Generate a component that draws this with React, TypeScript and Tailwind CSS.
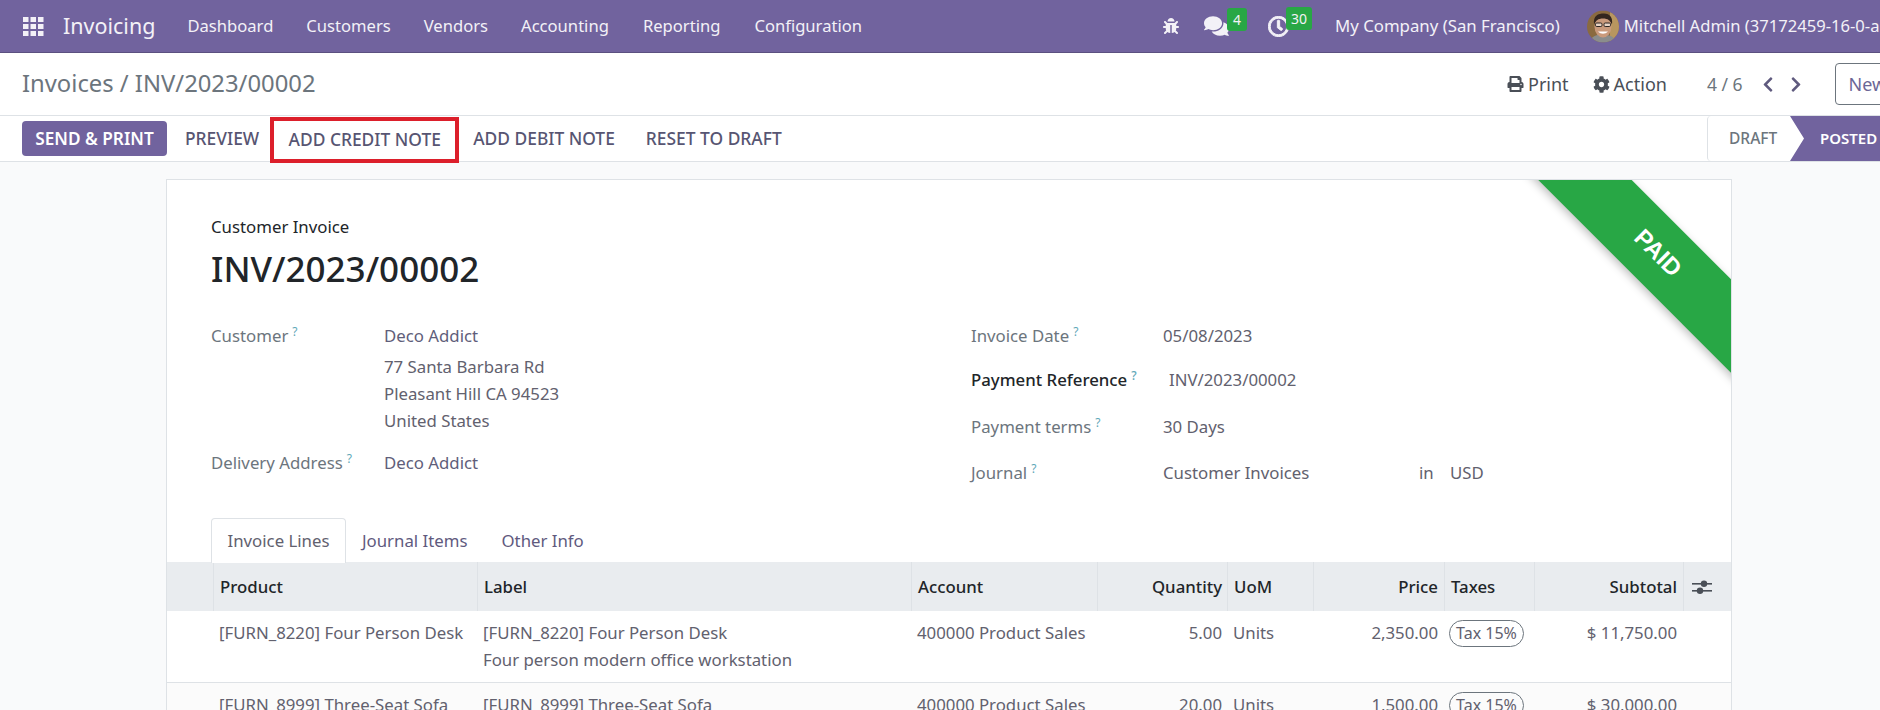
import { FaBug, FaChevronLeft, FaChevronRight, FaCog, FaComments, FaPrint, FaRegClock } from 'react-icons/fa';

const navLinks = [
    { label: 'Dashboard', className: 'ml-[32px]' },
    { label: 'Customers', className: 'ml-[33px]' },
    { label: 'Vendors', className: 'ml-[33px]' },
    { label: 'Accounting', className: 'ml-[33px]' },
    { label: 'Reporting', className: 'ml-[34px]' },
    { label: 'Configuration', className: 'ml-[34px]' },
];

const rows = [
    {
        product: '[FURN_8220] Four Person Desk',
        label: '[FURN_8220] Four Person Desk',
        note: 'Four person modern office workstation',
        quantity: '5.00',
        price: '2,350.00',
        subtotal: '$ 11,750.00',
    },
    {
        product: '[FURN_8999] Three-Seat Sofa',
        label: '[FURN_8999] Three-Seat Sofa',
        note: 'Three Seater Sofa with Lounger in Steel Grey Colour',
        quantity: '20.00',
        price: '1,500.00',
        subtotal: '$ 30,000.00',
    },
];

const tableCols = 'grid grid-cols-[46px_264px_434px_186px_130px_86px_131px_90px_149px_48px]';

function Help() {
    return <sup className="ml-[4px] text-[12px] text-[#5fa8b8]">?</sup>;
}

function Avatar() {
    return (
        <svg viewBox="0 0 32 32" className="h-[33px] w-[32px] shrink-0">
            <clipPath id="avatar-clip">
                <circle cx="16" cy="16" r="16" />
            </clipPath>
            <g clipPath="url(#avatar-clip)">
                <rect width="32" height="32" fill="#8a6a3f" />
                <rect x="23" width="9" height="32" fill="#b8965f" />
                <path d="M3 32c1-7 7-8 13-8s12 2 13 8z" fill="#8b8d8c" />
                <ellipse cx="16" cy="16" rx="8.5" ry="11" fill="#c99a7c" />
                <path d="M7 14C6 5 11 3 17 3s9 4 8 11c-2-4-4-6-9-6s-7 2-9 6z" fill="#33261f" />
                <rect x="8.5" y="12.5" width="6.5" height="3.5" rx="1.2" fill="#e9d5c6" stroke="#2b2523" strokeWidth="1" />
                <rect x="17" y="12.5" width="6.5" height="3.5" rx="1.2" fill="#e9d5c6" stroke="#2b2523" strokeWidth="1" />
                <path d="M11 21c3 3 7 3 10 0z" fill="#fff" />
            </g>
        </svg>
    );
}

function AppsIcon() {
    return (
        <svg viewBox="0 0 21 19" className="h-[19px] w-[21px] shrink-0" fill="#f3f1f7">
            <rect x="0" y="0" width="5.5" height="5" />
            <rect x="7.5" y="0" width="5.5" height="5" />
            <rect x="15" y="0" width="5.5" height="5" />
            <rect x="0" y="7" width="5.5" height="5" />
            <rect x="7.5" y="7" width="5.5" height="5" />
            <rect x="15" y="7" width="5.5" height="5" />
            <rect x="0" y="14" width="5.5" height="5" />
            <rect x="7.5" y="14" width="5.5" height="5" />
            <rect x="15" y="14" width="5.5" height="5" />
        </svg>
    );
}

function SlidersIcon() {
    return (
        <svg viewBox="0 0 20 16" className="h-[16px] w-[20px]" fill="#4a4f57">
            <rect x="0" y="4" width="20" height="1.6" />
            <rect x="0" y="11" width="20" height="1.6" />
            <circle cx="12" cy="4.8" r="3.2" />
            <circle cx="8" cy="11.8" r="3.2" />
        </svg>
    );
}

export default function App() {
    return (
        <div className="h-[710px] w-[1880px] overflow-hidden bg-[#f9fafb] font-['Noto_Sans',sans-serif] text-[16.8px] text-[#62616e]">
            {/* Top navbar */}
            <header className="flex h-[53px] items-center overflow-hidden whitespace-nowrap border-b border-[#5b5080] bg-[#71639e] pl-[23px] text-[16.6px] text-[#f3f1f7]">
                <AppsIcon />
                <span className="ml-[19px] text-[21.5px]">Invoicing</span>
                {navLinks.map((link) => (
                    <span key={link.label} className={link.className}>
                        {link.label}
                    </span>
                ))}
                <FaBug className="ml-[301px] h-[16px] w-[16px] shrink-0" />
                <div className="relative ml-[25px] flex w-[44px] shrink-0">
                    <FaComments className="h-[24px] w-[25px]" />
                    <span className="absolute -top-[6px] left-[23px] rounded-[3px] bg-[#28a745] px-[6px] text-[14px] leading-[23px]">4</span>
                </div>
                <div className="relative ml-[20px] flex w-[45px] shrink-0">
                    <FaRegClock className="h-[21px] w-[21px] stroke-[24px]" />
                    <span className="absolute -top-[9px] left-[18px] rounded-[3px] bg-[#28a745] px-[5px] text-[14px] leading-[23px]">30</span>
                </div>
                <span className="ml-[22px] text-[16.8px]">My Company (San Francisco)</span>
                <div className="ml-[27px] flex items-center gap-[5px]">
                    <Avatar />
                    <span>Mitchell Admin (37172459-16-0-all)</span>
                </div>
            </header>

            {/* Breadcrumb and pager */}
            <div className="flex h-[63px] items-center overflow-hidden whitespace-nowrap border-b border-[#dee2e6] bg-white pl-[22px]">
                <span className="text-[23.8px] text-[#6c757d]">Invoices / INV/2023/00002</span>
                <div className="ml-auto flex w-[373px] shrink-0 items-center text-[18px] text-[#4a4f57]">
                    <FaPrint className="h-[16px] w-[17px] shrink-0" />
                    <span className="ml-[4px]">Print</span>
                    <FaCog className="ml-[24px] h-[17px] w-[17px] shrink-0" />
                    <span className="ml-[4px]">Action</span>
                    <span className="ml-[40px] text-[17.5px] text-[#6c757d]">4 / 6</span>
                    <FaChevronLeft className="ml-[19px] h-[17px] w-[12px] shrink-0 text-[#5f5a7e]" />
                    <FaChevronRight className="ml-[16px] h-[17px] w-[12px] shrink-0 text-[#5f5a7e]" />
                    <span className="ml-[33px] flex h-[42px] w-[70px] shrink-0 items-center rounded-l-[4px] border border-[#6c757d] pl-[13px] text-[#6c6796]">New</span>
                </div>
            </div>

            {/* Action buttons and status bar */}
            <div className="flex h-[46px] items-center whitespace-nowrap border-b border-[#dee2e6] bg-white pl-[22px] text-[17.4px] font-medium text-[#575572]">
                <span className="flex h-[35px] w-[145px] items-center justify-center rounded-[4px] bg-[#71639e] text-[17.2px] font-semibold text-white">SEND &amp; PRINT</span>
                <span className="ml-[18px]">PREVIEW</span>
                <span className="relative z-10 ml-[11px] flex h-[46px] w-[189px] translate-y-[1px] items-center justify-center border-[4px] border-[#dc1f2b]">ADD CREDIT NOTE</span>
                <span className="ml-[14px]">ADD DEBIT NOTE</span>
                <span className="ml-[31px]">RESET TO DRAFT</span>
                <div className="ml-auto flex h-full w-[173px] items-stretch">
                    <span className="flex w-[83px] items-center rounded-l-[4px] border-l border-[#dee2e6] pl-[21px] text-[15.5px] text-[#6c757d]">DRAFT</span>
                    <span className="flex flex-1 items-center bg-[#71639e] pl-[30px] text-[15px] font-semibold text-white [clip-path:polygon(0_0,100%_0,100%_100%,0_100%,14px_50%)]">POSTED</span>
                </div>
            </div>

            {/* Invoice sheet */}
            <div className="relative ml-[166px] mt-[17px] w-[1566px] border border-[#dee2e6] bg-white">
                <div className="absolute right-0 top-0 h-[212px] w-[212px] overflow-hidden">
                    <div className="absolute left-[-11px] top-[40px] flex h-[66px] w-[300px] rotate-45 items-center justify-center bg-[#28a745] font-['Liberation_Sans',sans-serif] text-[24px] font-bold text-white shadow-[0_3px_8px_rgba(0,0,0,0.25)]">
                        PAID
                    </div>
                </div>

                <div className="pl-[44px] pt-[35px]">
                    <div className="leading-[24px] text-[#212529]">Customer Invoice</div>
                    <h1 className="mt-[6px] text-[35px] font-medium leading-[48px] text-[#212529]">INV/2023/00002</h1>

                    <div className="mt-[28px] flex">
                        <div className="w-[760px] shrink-0">
                            <div className="flex">
                                <div className="w-[173px] leading-[30px] text-[#6c757d]">
                                    Customer
                                    <Help />
                                </div>
                                <div>
                                    <div className="leading-[30px] text-[#5f5e7a]">Deco Addict</div>
                                    <div className="mt-[2px] leading-[27px]">77 Santa Barbara Rd</div>
                                    <div className="leading-[27px]">Pleasant Hill CA 94523</div>
                                    <div className="leading-[27px]">United States</div>
                                </div>
                            </div>
                            <div className="mt-[14px] flex">
                                <div className="w-[173px] leading-[30px] text-[#6c757d]">
                                    Delivery Address
                                    <Help />
                                </div>
                                <div className="leading-[30px] text-[#5f5e7a]">Deco Addict</div>
                            </div>
                        </div>
                        <div>
                            <div className="flex h-[30px] items-center">
                                <div className="w-[192px] text-[#6c757d]">
                                    Invoice Date
                                    <Help />
                                </div>
                                <div>05/08/2023</div>
                            </div>
                            <div className="mt-[14px] flex h-[30px] items-center">
                                <div className="w-[198px] font-medium text-[#212529]">
                                    Payment Reference
                                    <Help />
                                </div>
                                <div>INV/2023/00002</div>
                            </div>
                            <div className="mt-[17px] flex h-[30px] items-center">
                                <div className="w-[192px] text-[#6c757d]">
                                    Payment terms
                                    <Help />
                                </div>
                                <div>30 Days</div>
                            </div>
                            <div className="mt-[16px] flex h-[30px] items-center">
                                <div className="w-[192px] text-[#6c757d]">
                                    Journal
                                    <Help />
                                </div>
                                <div className="w-[256px]">Customer Invoices</div>
                                <div className="w-[31px]">in</div>
                                <div>USD</div>
                            </div>
                        </div>
                    </div>

                    {/* Tabs */}
                    <div className="relative z-10 mt-[30px] flex h-[45px] items-stretch">
                        <div className="flex w-[135px] items-center justify-center rounded-t-[4px] border border-b-0 border-[#dee2e6] bg-white">Invoice Lines</div>
                        <div className="ml-[16px] flex items-center text-[#5f5a7e]">Journal Items</div>
                        <div className="ml-[34px] flex items-center text-[#5f5a7e]">Other Info</div>
                    </div>
                </div>

                {/* Invoice lines */}
                <div className={`${tableCols} -mt-px h-[49px] items-stretch bg-[#e9ecef] font-medium text-[#212529]`}>
                    <div />
                    <div className="flex items-center border-l border-[#dee2e6] pl-[6px]">Product</div>
                    <div className="flex items-center border-l border-[#dee2e6] pl-[6px]">Label</div>
                    <div className="flex items-center border-l border-[#dee2e6] pl-[6px]">Account</div>
                    <div className="flex items-center justify-end border-l border-[#dee2e6] pr-[5px]">Quantity</div>
                    <div className="flex items-center border-l border-[#dee2e6] pl-[6px]">UoM</div>
                    <div className="flex items-center justify-end border-l border-[#dee2e6] pr-[6px]">Price</div>
                    <div className="flex items-center border-l border-[#dee2e6] pl-[6px]">Taxes</div>
                    <div className="flex items-center justify-end border-l border-[#dee2e6] pr-[6px]">Subtotal</div>
                    <div className="flex items-center border-l border-[#dee2e6] pl-[8px]">
                        <SlidersIcon />
                    </div>
                </div>
                {rows.map((row, i) => (
                    <div key={row.product} className={`${tableCols} h-[72px] border-b border-[#dee2e6] pt-[8px] leading-[27px] ${i % 2 === 1 ? 'bg-[#fbfbfb]' : ''}`}>
                        <div />
                        <div className="whitespace-nowrap pl-[6px]">{row.product}</div>
                        <div className="pl-[6px]">
                            <div>{row.label}</div>
                            <div>{row.note}</div>
                        </div>
                        <div className="pl-[6px]">400000 Product Sales</div>
                        <div className="pr-[5px] text-right">{row.quantity}</div>
                        <div className="pl-[6px]">Units</div>
                        <div className="pr-[6px] text-right">{row.price}</div>
                        <div className="pl-[5px]">
                            <span className="inline-flex h-[27px] w-[75px] items-center justify-center rounded-full border border-[#6c757d] text-[16px]">Tax 15%</span>
                        </div>
                        <div className="pr-[6px] text-right">{row.subtotal}</div>
                        <div />
                    </div>
                ))}
            </div>
        </div>
    );
}
